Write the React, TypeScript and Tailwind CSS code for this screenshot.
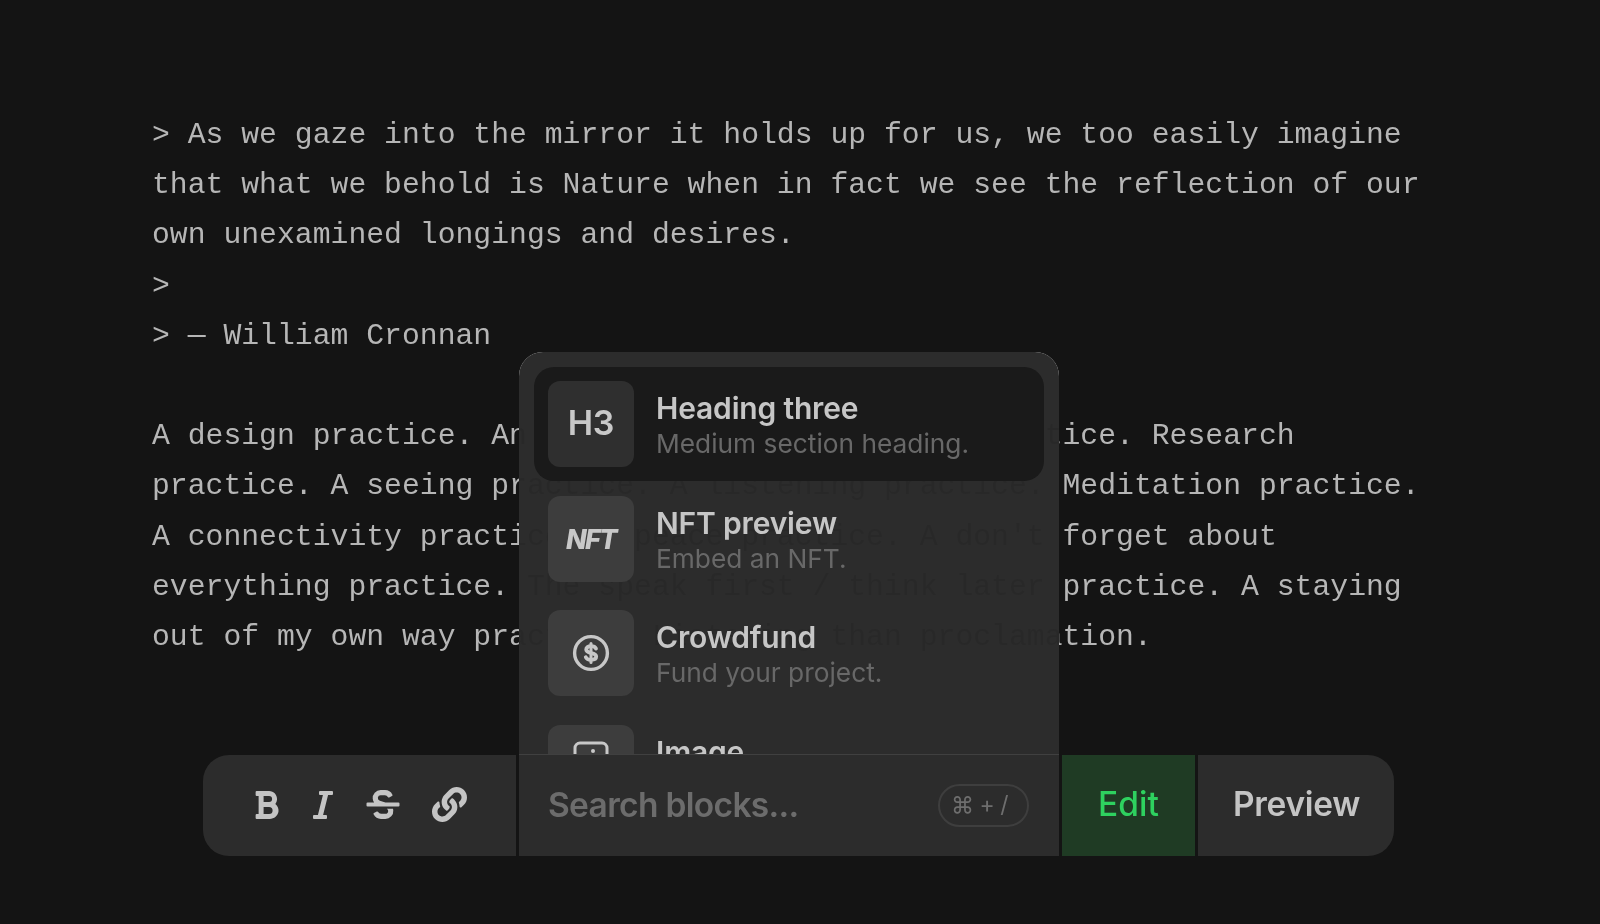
import React from "react";
import { FaBold, FaItalic, FaStrikethrough, FaLink } from "react-icons/fa";

const lines = [
  "> As we gaze into the mirror it holds up for us, we too easily imagine",
  "that what we behold is Nature when in fact we see the reflection of our",
  "own unexamined longings and desires.",
  ">",
  "> — William Cronnan",
  "\u00a0",
  "A design practice. An art practice. A writing practice. Research",
  "practice. A seeing practice. A listening practice. Meditation practice.",
  "A connectivity practice. A peace practice. A don't forget about",
  "everything practice. The speak first / think later practice. A staying",
  "out of my own way practice. Listening than proclamation.",
];

function DollarIcon() {
  return (
    <svg width="38" height="38" viewBox="0 0 38 38" fill="none" stroke="#c8c8c8" strokeLinecap="round">
      <circle cx="19" cy="19" r="16.4" strokeWidth="3.4" />
      <path d="M24 14.6c-.8-1.6-2.6-2.4-5-2.4-2.9 0-4.8 1.3-4.8 3.4 0 4.8 10 2.2 10 7 0 2.1-2.1 3.3-5.2 3.3-2.5 0-4.4-.9-5.2-2.6" strokeWidth="3.8" />
      <path d="M19 9.5v19" strokeWidth="3" />
    </svg>
  );
}

function ImageIcon() {
  return (
    <svg width="36" height="54" viewBox="0 0 36 54" fill="none" stroke="#c8c8c8">
      <rect x="2" y="2" width="32" height="50" rx="5" strokeWidth="3" />
      <circle cx="20" cy="10" r="2" fill="#c8c8c8" stroke="none" />
    </svg>
  );
}

function Row({ icon, title, sub, selected }: { icon: React.ReactNode; title: string; sub: string; selected?: boolean }) {
  return (
    <div className={`flex items-center gap-[22px] p-[14px] h-[114px] shrink-0 rounded-[20px] mb-[0.67px] ${selected ? "bg-[#1a1a1a]" : ""}`}>
      <div className={`w-[86px] h-[86px] shrink-0 rounded-[12px] flex items-center justify-center ${selected ? "bg-[#2f2f2f]" : "bg-[#3d3d3d]"}`}>
        {icon}
      </div>
      <div className="flex flex-col pt-[4px]">
        <div className="text-[30px] leading-[36px] font-semibold tracking-[-0.006em] text-[#c6c6c6]">{title}</div>
        <div className="text-[26.3px] leading-[36px] text-[#686868]">{sub}</div>
      </div>
    </div>
  );
}

export default function App() {
  return (
    <div className="w-full h-[924px] overflow-hidden bg-[#141414] font-['Inter',sans-serif]">
      <div className="pt-[110px] pl-[152px] font-['Liberation_Mono',monospace] text-[29.76px] leading-[50.2px] text-[#b6b6b6] whitespace-nowrap h-[755px]">
        {lines.map((l, i) => (
          <div key={i}>{l}</div>
        ))}
      </div>

      <div className="ml-[203px] w-[1191px] h-[101px] flex gap-[3px]">
        <div className="w-[313px] bg-[#2c2c2c] rounded-l-[26px] flex items-center pb-[2px] text-[#c4c4c4]">
          <FaBold className="ml-[50px] w-[27px] h-[32px]" />
          <FaItalic className="ml-[33px] w-[20px] h-[32px]" />
          <FaStrikethrough className="ml-[32px] w-[36px] h-[33px]" />
          <FaLink className="ml-[31px] w-[35px] h-[35px]" />
        </div>
        <div className="relative w-[540px] bg-[#2c2c2c] flex items-center justify-between pb-[1px] pl-[29px] pr-[30px]">
          <div className="absolute left-0 right-0 bottom-full h-[403px] overflow-hidden rounded-t-[24px] border-b border-[#404040] bg-[#282828]/98 backdrop-invert pt-[15px] px-[15px]">
            <Row selected icon={<span className="pb-[3px] text-[34px] font-semibold text-[#c8c8c8] tracking-[-0.01em]">H3</span>} title="Heading three" sub="Medium section heading." />
            <Row icon={<span className="pt-[3px] text-[27px] font-extrabold italic text-[#c8c8c8] tracking-[-0.06em]">NFT</span>} title="NFT preview" sub="Embed an NFT." />
            <Row icon={<DollarIcon />} title="Crowdfund" sub="Fund your project." />
            <Row icon={<ImageIcon />} title="Image" sub="Upload an image." />
          </div>
          <span className="text-[33.5px] font-semibold tracking-[-0.02em] text-[#6c6c6c]">Search blocks...</span>
          <span className="mt-[1px] w-[91px] h-[43px] rounded-full border-2 border-[#3e3e3e] flex items-center pl-[11px] text-[23px] tracking-[-0.02em] text-[#6e6e6e] whitespace-pre">⌘ + /</span>
        </div>
        <div className="w-[133px] bg-[#1f3b24] flex items-center justify-center pb-[2px] text-[33.5px] font-medium text-[#2ed15f]">Edit</div>
        <div className="flex-1 bg-[#2c2c2c] rounded-r-[26px] flex items-center justify-center pb-[2px] pl-[1px] text-[33.5px] font-semibold tracking-[-0.01em] text-[#c4c4c4]">Preview</div>
      </div>
    </div>
  );
}
